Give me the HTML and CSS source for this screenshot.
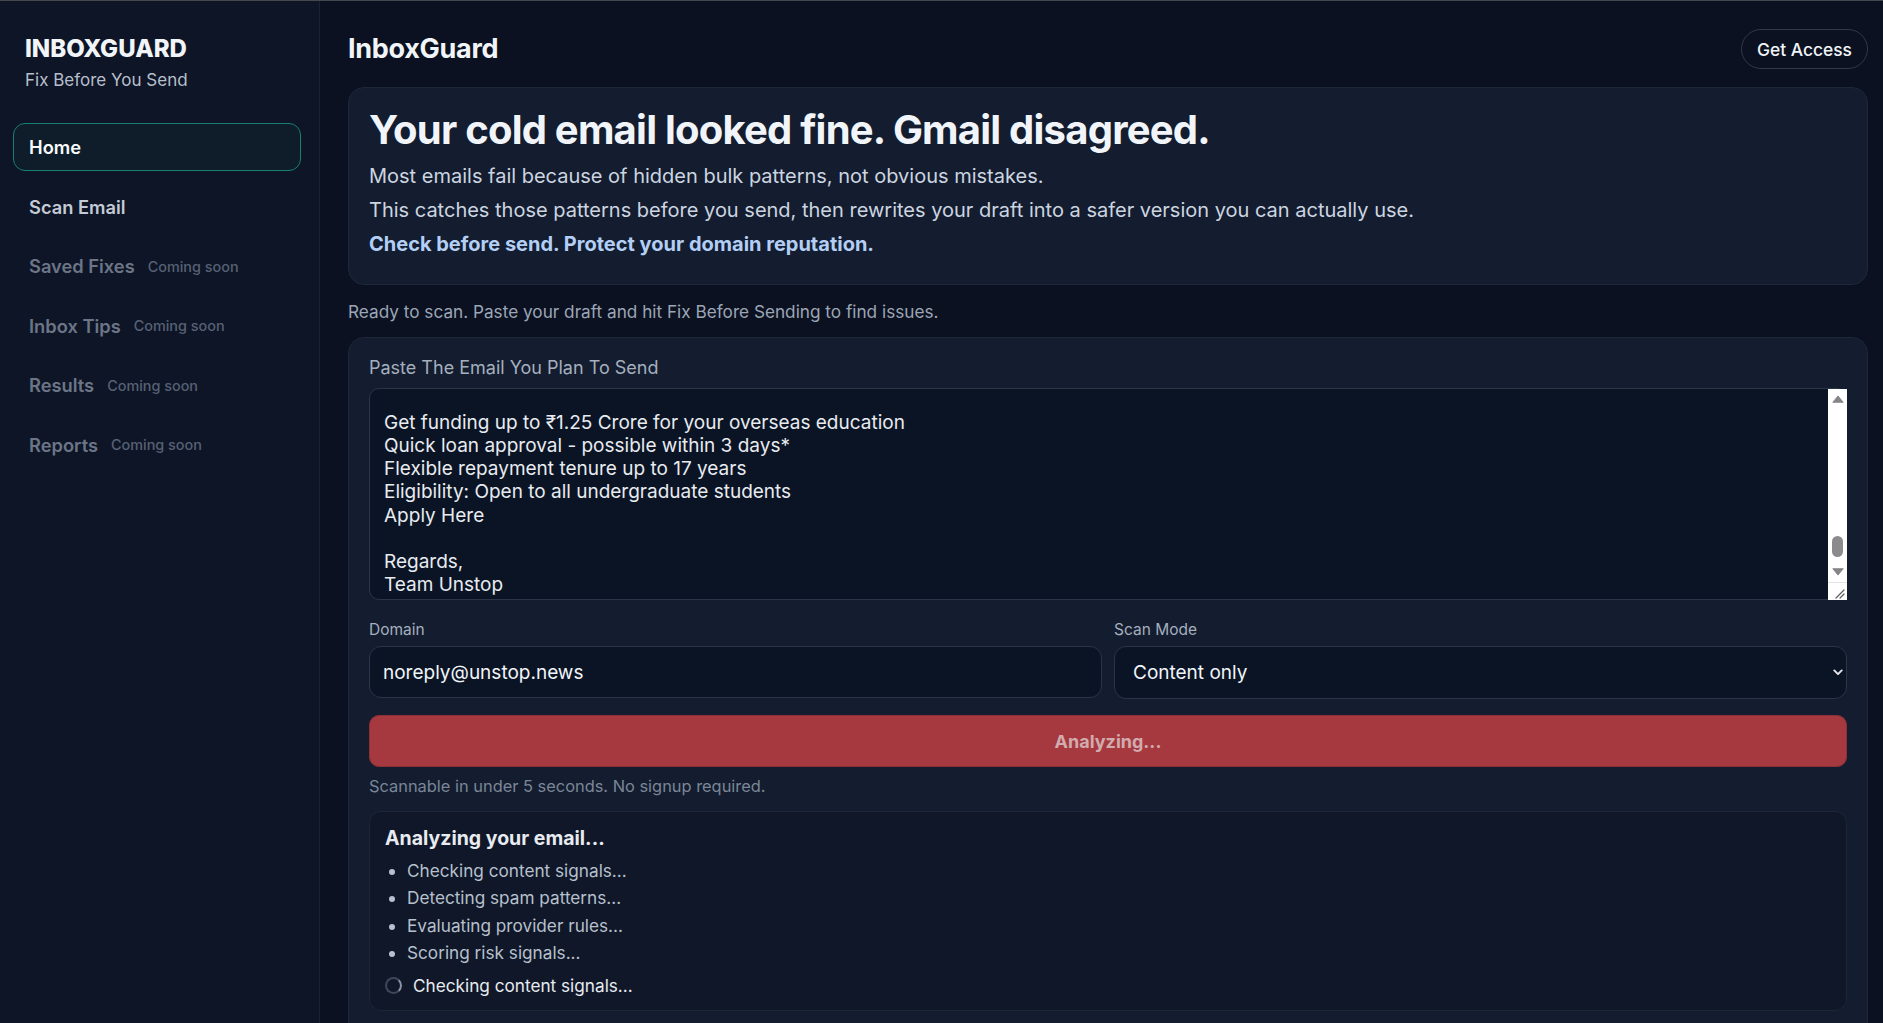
FILE: index.html
```html
<!DOCTYPE html>
<html lang="en">
<head>
<meta charset="utf-8">
<title>InboxGuard</title>
<link rel="stylesheet" href="styles.css">
</head>
<body>
<div class="app">
  <aside class="sidebar">
    <div class="brand">
      <div class="brand-name">INBOXGUARD</div>
      <div class="brand-tag">Fix Before You Send</div>
    </div>
    <nav class="nav">
      <a class="nav-item active">Home</a>
      <a class="nav-item">Scan Email</a>
      <a class="nav-item disabled">Saved Fixes <span class="soon">Coming soon</span></a>
      <a class="nav-item disabled">Inbox Tips <span class="soon">Coming soon</span></a>
      <a class="nav-item disabled">Results <span class="soon">Coming soon</span></a>
      <a class="nav-item disabled">Reports <span class="soon">Coming soon</span></a>
    </nav>
  </aside>
  <main class="main">
    <header class="topbar">
      <h1 class="page-title">InboxGuard</h1>
      <button class="access-btn">Get Access</button>
    </header>
    <section class="hero">
      <h2 class="hero-title">Your cold email looked fine. Gmail disagreed.</h2>
      <p class="hero-text">Most emails fail because of hidden bulk patterns, not obvious mistakes.</p>
      <p class="hero-text">This catches those patterns before you send, then rewrites your draft into a safer version you can actually use.</p>
      <p class="hero-link">Check before send. Protect your domain reputation.</p>
    </section>
    <p class="status">Ready to scan. Paste your draft and hit Fix Before Sending to find issues.</p>
    <section class="scan-card">
      <label class="field-label">Paste The Email You Plan To Send</label>
      <div class="textarea-wrap">
        <textarea class="email-input" id="email">Subject: Study abroad without financial stress

Hi there,

Planning to pursue your higher studies abroad this year?

We know that financing a degree overseas can feel overwhelming.
Tuition fees, living expenses, travel, insurance and visa costs add up quickly.
That is why we have partnered with leading lenders to bring you an exclusive offer.

Why students choose this loan:

- 100% coverage of tuition and living expenses
- No collateral required for eligible universities
- Doorstep document pickup and digital processing
- Dedicated counsellor to guide you at every step
- Pre-admission sanction letters for visa applications

Popular destinations covered:

United States
United Kingdom
Canada
Germany
Australia
Ireland
New Zealand
Singapore

Thousands of students have already secured funding through this programme.
Don't let finances hold back your global education plans.

How it works:

1. Fill out a short application form
2. Upload your admission and academic documents
3. Get a call from our loan expert
4. Receive your sanction letter

Limited period offer - processing fee waiver for early applicants!

Still have questions? Join our free webinar this Saturday.
Our experts will walk you through the entire process.

Register Now

What you need to apply:

- Admission letter (conditional or unconditional)
- Academic transcripts
- Passport and ID proof
- Co-applicant income documents

Offer Highlights:

Get funding up to ₹1.25 Crore for your overseas education
Quick loan approval - possible within 3 days*
Flexible repayment tenure up to 17 years
Eligibility: Open to all undergraduate students
Apply Here

Regards,
Team Unstop</textarea>
        <div class="fake-scroll" aria-hidden="true">
          <div class="sb-btn">
            <svg width="12" height="8" viewBox="0 0 12 8"><path d="M6 0.9 11.2 7.3H0.8Z" fill="#858585" stroke="#858585" stroke-width="0.9" stroke-linejoin="round"/></svg>
          </div>
          <div class="sb-track"><div class="sb-thumb"></div></div>
          <div class="sb-btn">
            <svg width="12" height="8" viewBox="0 0 12 8"><path d="M6 7.1 11.2 0.7H0.8Z" fill="#858585" stroke="#858585" stroke-width="0.9" stroke-linejoin="round"/></svg>
          </div>
          <div class="sb-corner">
            <svg width="18" height="17" viewBox="0 0 18 17"><path d="M7 15 15 7M11 15 15 11" stroke="#5e5e5e" stroke-width="1.2" stroke-linecap="round"/></svg>
          </div>
        </div>
      </div>
      <div class="field-row">
        <div class="field">
          <label class="small-label">Domain</label>
          <input class="text-input" type="text" value="noreply@unstop.news">
        </div>
        <div class="field">
          <label class="small-label">Scan Mode</label>
          <div class="select-wrap">
            <select class="select-input">
              <option>Content only</option>
            </select>
            <svg class="chevron" width="10" height="7" viewBox="0 0 10 7"><path d="M1.3 1.4 5 5.1 8.7 1.4" fill="none" stroke="#e5e7eb" stroke-width="1.9" stroke-linecap="round" stroke-linejoin="round"/></svg>
          </div>
        </div>
      </div>
      <button class="analyze-btn" disabled>Analyzing...</button>
      <p class="hint">Scannable in under 5 seconds. No signup required.</p>
      <div class="progress">
        <h3 class="progress-title">Analyzing your email...</h3>
        <ul class="steps">
          <li>Checking content signals...</li>
          <li>Detecting spam patterns...</li>
          <li>Evaluating provider rules...</li>
          <li>Scoring risk signals...</li>
        </ul>
        <div class="spin-row"><span class="spinner"></span><span>Checking content signals...</span></div>
      </div>
    </section>
  </main>
</div>
<script src="script.js"></script>
</body>
</html>
```

FILE: styles.css
```css
* { box-sizing: border-box; }

html, body {
  margin: 0;
  padding: 0;
  background: #0b1120;
  font-family: Inter, "Noto Sans", "DejaVu Sans", sans-serif;
  color: #e5e7eb;
}

.app {
  display: flex;
  height: 100vh;
  overflow: hidden;
  border-top: 1px solid #45484d;
}

/* Sidebar */
.sidebar {
  width: 320px;
  flex: 0 0 320px;
  background: #0e1526;
  border-right: 1px solid #1b2332;
  padding: 33px 18px 0 13px;
}

.brand {
  padding-left: 12px;
}

.brand-name {
  font-size: 24px;
  line-height: 30px;
  font-weight: 800;
  letter-spacing: 0;
  color: #f1f5f9;
}

.brand-tag {
  margin-top: 5px;
  font-size: 17px;
  line-height: 22px;
  color: #b6bfcc;
}

.nav {
  margin-top: 32px;
  display: flex;
  flex-direction: column;
  gap: 11.5px;
}

.nav-item {
  display: flex;
  align-items: center;
  height: 48px;
  padding: 0 15px;
  border: 1px solid transparent;
  border-radius: 12px;
  font-size: 18.3px;
  font-weight: 600;
  color: #c3cbd7;
}

.nav-item.active {
  background: #0e1d29;
  border-color: #17806f;
  color: #f8fafc;
}

.nav-item.disabled {
  color: #6c7587;
}

.soon {
  margin-left: 13px;
  font-size: 14.4px;
  font-weight: 500;
  color: #576175;
}

/* Main */
.main {
  flex: 1;
  min-width: 0;
  padding: 28px 15px 0 28px;
  overflow: hidden;
}

.topbar {
  height: 40px;
  display: flex;
  align-items: center;
  justify-content: space-between;
}

.page-title {
  margin: -1px 0 0;
  font-size: 27px;
  font-weight: 700;
  letter-spacing: -0.3px;
  color: #f1f5f9;
}

.access-btn {
  height: 40px;
  width: 127px;
  border-radius: 20px;
  border: 1px solid #2f3a4c;
  background: #0b1120;
  color: #f1f5f9;
  font-family: inherit;
  font-size: 17.4px;
  font-weight: 500;
}

.hero {
  margin-top: 18px;
  background: #131d2f;
  border: 1px solid #1c2738;
  border-radius: 16px;
  padding: 18px 20px 26px;
}

.hero-title {
  margin: 0;
  font-size: 40px;
  line-height: 48px;
  font-weight: 700;
  letter-spacing: -0.78px;
  color: #f1f5f9;
}

.hero-text,
.hero-link {
  margin: 6px 0 0;
  font-size: 20px;
  line-height: 28px;
  color: #cdd5e0;
}

.hero-text:first-of-type {
  margin-top: 8px;
}

.hero-link {
  font-weight: 700;
  color: #b3cff5;
}

.status {
  margin: 15px 0 0;
  font-size: 17.2px;
  line-height: 24px;
  color: #9ba6b6;
}

.scan-card {
  margin-top: 13px;
  background: #131d2f;
  border: 1px solid #1c2738;
  border-radius: 16px;
  padding: 18px 20px 20px;
  min-height: 720px;
}

.field-label {
  display: block;
  font-size: 18px;
  line-height: 24px;
  color: #a5afbe;
  margin-bottom: 8px;
}

.textarea-wrap {
  position: relative;
}

.email-input {
  display: block;
  width: 100%;
  height: 212px;
  resize: none;
  background: #0a1424;
  border: 1px solid #2a3547;
  border-radius: 10px;
  padding: 12px 30px 3px 14px;
  font-family: inherit;
  font-size: 19px;
  line-height: 23.1px;
  color: #e8ebf0;
  outline: none;
  overflow: hidden;
}

/* drawn scrollbar overlaying the textarea's right edge */
.fake-scroll {
  position: absolute;
  top: 1px;
  right: 0;
  bottom: 0;
  width: 19px;
  background: #ffffff;
  display: flex;
  flex-direction: column;
}

.sb-btn {
  height: 20px;
  flex: 0 0 20px;
  display: flex;
  align-items: center;
  justify-content: center;
}

.sb-btn svg {
  display: block;
}

.sb-track {
  flex: 1;
  display: flex;
  flex-direction: column;
  justify-content: flex-end;
  align-items: center;
  padding-bottom: 5px;
}

.sb-thumb {
  width: 11px;
  height: 21px;
  border-radius: 6px;
  background: #8b8b8b;
}

.sb-corner {
  height: 18px;
  flex: 0 0 18px;
  border-top: 1px solid #e3e3e3;
  display: flex;
  align-items: flex-end;
  justify-content: flex-end;
}

.sb-corner svg {
  display: block;
}

.field-row {
  margin-top: 19px;
  display: grid;
  grid-template-columns: 1fr 1fr;
  gap: 12px;
}

.small-label {
  display: block;
  font-size: 15.5px;
  line-height: 22px;
  color: #a5afbe;
  margin-bottom: 5px;
}

.text-input,
.select-input {
  display: block;
  width: 100%;
  height: 52px;
  background: #0a1424;
  border: 1px solid #2a3547;
  border-radius: 12px;
  font-family: inherit;
  color: #f1f5f9;
  outline: none;
}

.text-input {
  padding: 0 13px;
  font-size: 19px;
}

.select-wrap {
  position: relative;
}

.select-input {
  appearance: none;
  -webkit-appearance: none;
  padding: 0 18px;
  font-size: 19px;
  height: 53px;
}

.chevron {
  position: absolute;
  right: 4px;
  top: 23px;
  pointer-events: none;
}

.analyze-btn {
  display: block;
  width: 100%;
  height: 52px;
  margin-top: 16px;
  background: #a5393f;
  border: 1px solid #8d2f35;
  border-radius: 10px;
  font-family: inherit;
  font-size: 18px;
  font-weight: 700;
  color: #d2abae;
}

.hint {
  margin: 8px 0 0;
  font-size: 16.4px;
  line-height: 22px;
  color: #7b8697;
}

.progress {
  margin-top: 14px;
  background: #0f1729;
  border: 1px solid #1c2637;
  border-radius: 12px;
  padding: 13px 15px 11px;
}

.progress-title {
  margin: 0;
  font-size: 19.5px;
  line-height: 26px;
  font-weight: 700;
  color: #e8ebf0;
}

.steps {
  margin: 6px 0 0;
  padding-left: 22px;
  font-size: 17.2px;
  line-height: 27.3px;
  color: #b7c0cc;
}

.spin-row {
  margin-top: 6px;
  display: flex;
  align-items: center;
  gap: 11px;
  font-size: 17.2px;
  line-height: 27px;
  color: #e8ebf0;
}

.spinner {
  width: 17px;
  height: 17px;
  border-radius: 50%;
  border: 2px solid #3d4759;
  border-right-color: #8893a5;
  flex: 0 0 17px;
}
```

FILE: script.js
```js
var t = document.getElementById('email');
t.scrollTop = t.scrollHeight;
```
